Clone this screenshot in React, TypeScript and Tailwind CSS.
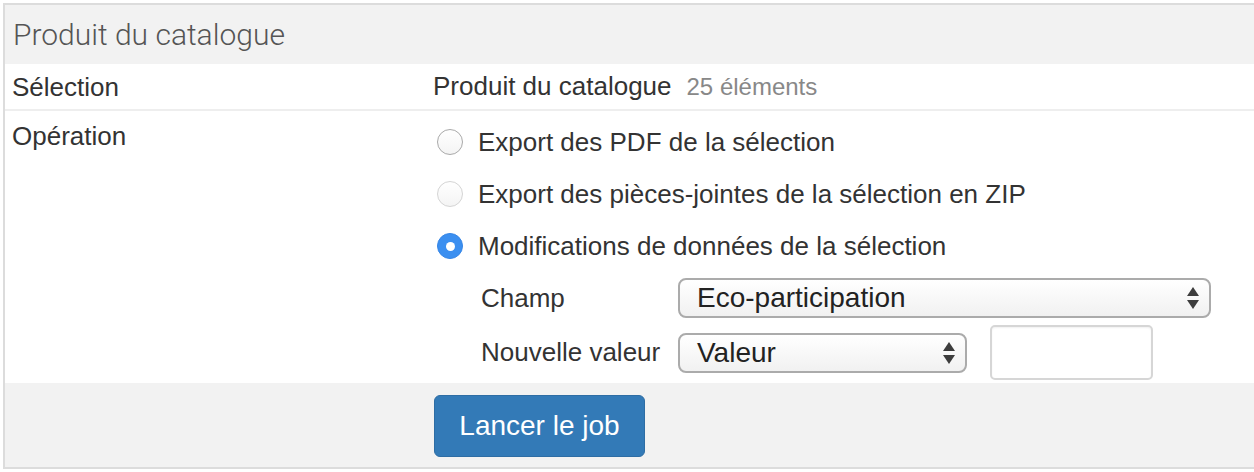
import React from "react";

const font = { fontFamily: '"Liberation Sans", Arial, sans-serif' };

function Arrows() {
  return (
    <svg width="14" height="24" viewBox="0 0 14 24" className="shrink-0">
      <path d="M7 1 L13 10 L1 10 Z" fill="#3d3d3d" />
      <path d="M1 14 L13 14 L7 23 Z" fill="#3d3d3d" />
    </svg>
  );
}

function Radio({ checked, light }: { checked?: boolean; light?: boolean }) {
  if (checked) {
    return (
      <span className="w-[26px] h-[26px] rounded-full bg-[#3b8ff0] border border-[#3585e6] flex items-center justify-center shrink-0">
        <span className="w-[9px] h-[9px] rounded-full bg-white" />
      </span>
    );
  }
  return (
    <span
      className={`w-[26px] h-[26px] rounded-full bg-gradient-to-b from-white to-[#f4f4f4] border shrink-0 ${
        light ? "border-[#d4d4d4]" : "border-[#a9a9a9]"
      }`}
    />
  );
}

export default function App() {
  return (
    <div className="w-[1254px] h-[472px] bg-white pt-[3px] pl-[3px] text-[#333]" style={font}>
      <div className="border-l-2 border-t-2 border-b-2 border-[#dcdcdc] flex flex-col">
        <div className="h-[59px] bg-[#f2f2f2] flex items-center pl-[8px]">
          <span
            className="text-[30px] text-[#555] font-light"
            style={{ fontFamily: 'Roboto, "Liberation Sans", sans-serif' }}
          >
            Produit du catalogue
          </span>
        </div>
        <div className="h-[47px] flex items-center border-b-2 border-[#eeeeee]">
          <div className="w-[428px] pl-[7px] text-[26px] leading-[30px]">Sélection</div>
          <div className="flex items-baseline gap-[15px]">
            <span className="text-[26px] leading-[30px]">Produit du catalogue</span>
            <span className="text-[24px] text-[#888]">25 éléments</span>
          </div>
        </div>
        <div className="flex pb-[3px]">
          <div className="w-[428px] pl-[7px] pt-[10px] text-[26px] leading-[30px]">Opération</div>
          <div className="flex flex-col pt-[5px]">
            <div className="h-[52px] flex items-center pl-[4px] gap-[15px] text-[26px]">
              <Radio />
              <span>Export des PDF de la sélection</span>
            </div>
            <div className="h-[52px] flex items-center pl-[4px] gap-[15px] text-[26px]">
              <Radio light />
              <span>Export des pièces-jointes de la sélection en ZIP</span>
            </div>
            <div className="h-[52px] flex items-center pl-[4px] gap-[15px] text-[26px]">
              <Radio checked />
              <span>Modifications de données de la sélection</span>
            </div>
            <div className="flex items-center mt-[6px] pl-[48px]">
              <span className="w-[197px] text-[26px]">Champ</span>
              <div className="w-[533px] h-[40px] rounded-[8px] border-2 border-[#ababab] bg-gradient-to-b from-white to-[#f1f1f1] flex items-center justify-between pl-[17px] pr-[9px]">
                <span className="text-[28px] text-[#222]">Eco-participation</span>
                <Arrows />
              </div>
            </div>
            <div className="flex items-center mt-[7px] pl-[48px]">
              <span className="w-[197px] text-[26px]">Nouvelle valeur</span>
              <div className="w-[289px] h-[40px] rounded-[8px] border-2 border-[#ababab] bg-gradient-to-b from-white to-[#f1f1f1] flex items-center justify-between pl-[17px] pr-[9px]">
                <span className="text-[28px] text-[#222]">Valeur</span>
                <Arrows />
              </div>
              <div className="ml-[23px] w-[163px] h-[55px] rounded-[5px] border-2 border-[#d6d6d6] bg-white shadow-[inset_0_1px_2px_rgba(0,0,0,0.06)]" />
            </div>
          </div>
        </div>
        <div className="h-[84px] bg-[#f2f2f2] pt-[12px] pl-[429px]">
          <button className="w-[211px] h-[62px] rounded-[6px] bg-[#337ab7] border border-[#2e6da4] text-white text-[28px] flex items-center justify-center">
            Lancer le job
          </button>
        </div>
      </div>
    </div>
  );
}
